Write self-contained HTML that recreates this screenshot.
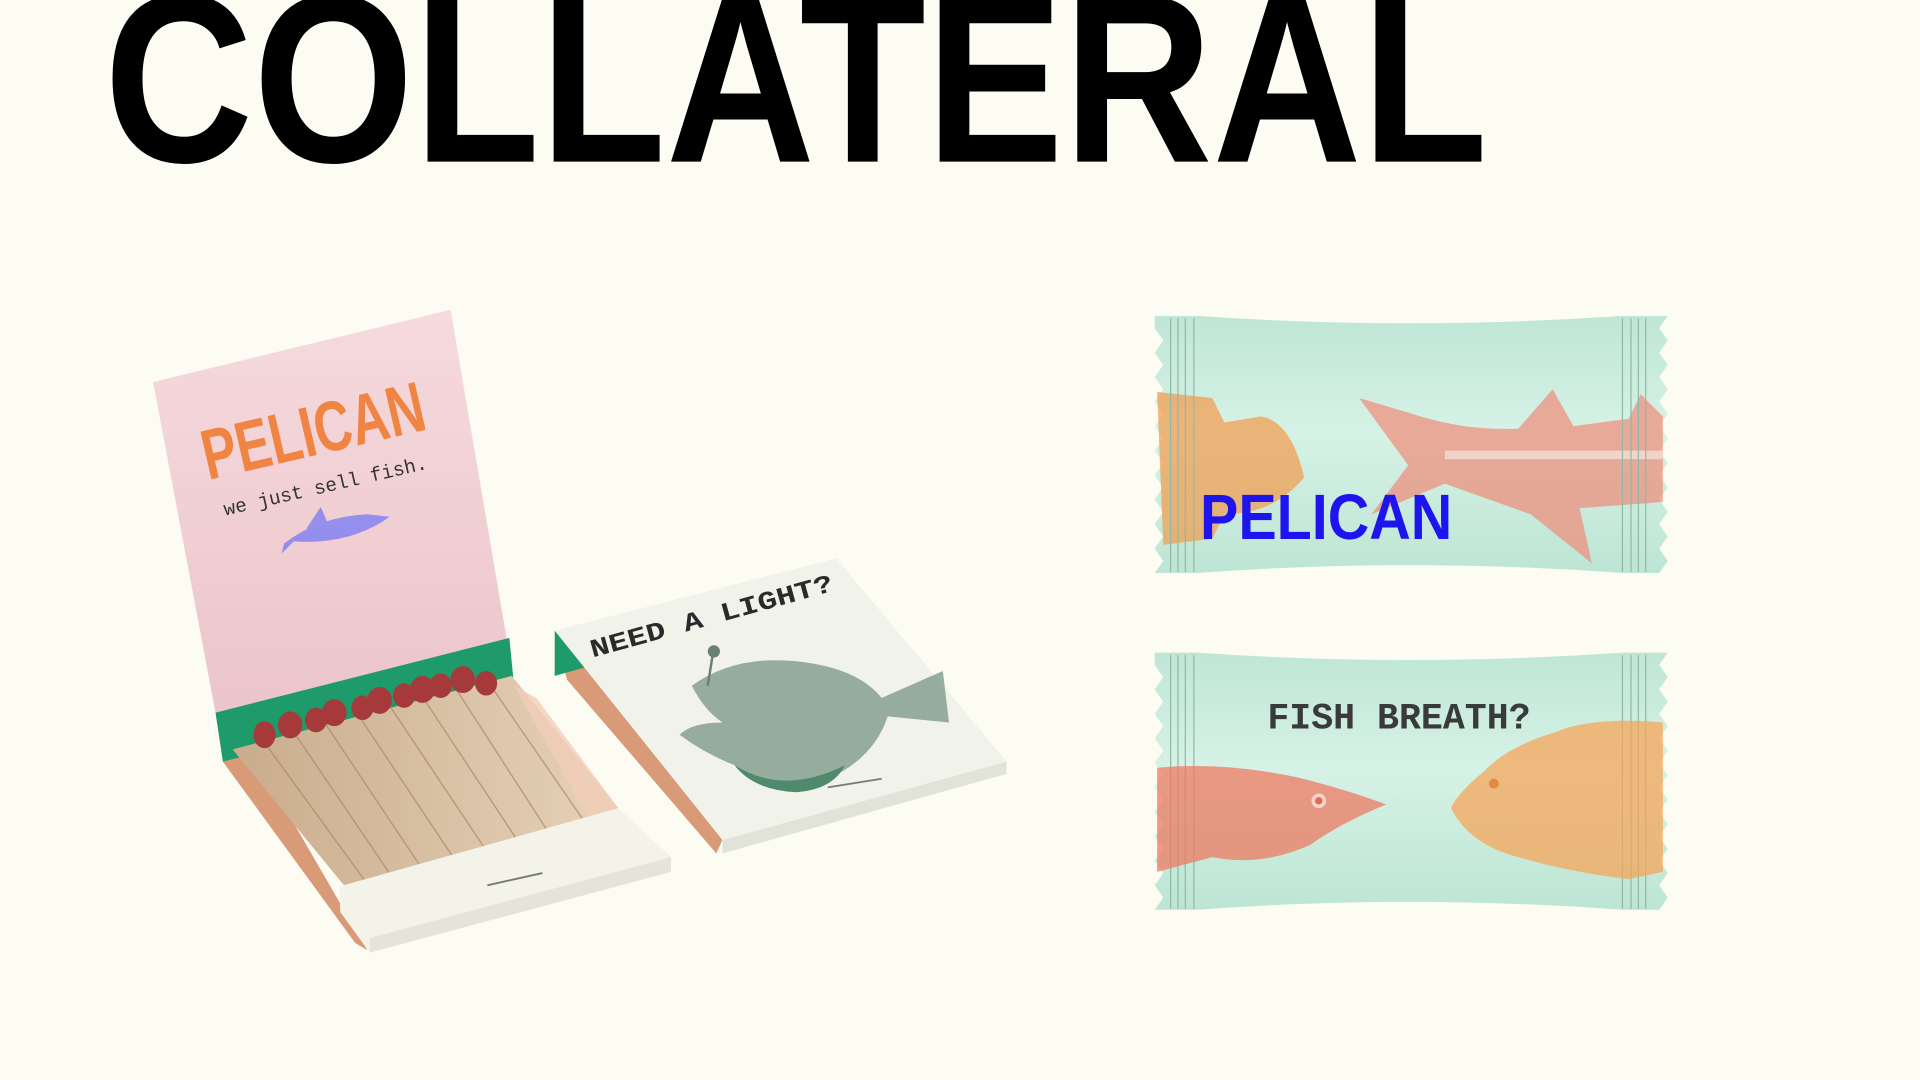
<!DOCTYPE html>
<html><head><meta charset="utf-8"><style>
html,body{margin:0;padding:0;background:#fdfcf3;width:1920px;height:1080px;overflow:hidden}
svg{display:block}
</style></head><body>
<svg width="1920" height="1080" viewBox="0 0 1568 882" xmlns="http://www.w3.org/2000/svg">
<defs>
<linearGradient id="pink" x1="0" y1="0" x2="0" y2="1"><stop offset="0" stop-color="#f6dadd"/><stop offset="1" stop-color="#ebc5ca"/></linearGradient>
<linearGradient id="mint" x1="0" y1="0" x2="0" y2="1"><stop offset="0" stop-color="#bfe6d6"/><stop offset=".45" stop-color="#d6f2e6"/><stop offset="1" stop-color="#bde5d4"/></linearGradient>
<linearGradient id="wood" x1="0" y1="0" x2="1" y2="0"><stop offset="0" stop-color="#c9ac8c"/><stop offset="1" stop-color="#e6d2b8"/></linearGradient>
</defs>
<rect width="1568" height="882" fill="#fdfcf3"/>
<text x="85" y="132" font-family="Liberation Sans, sans-serif" font-weight="700" font-size="196" textLength="1130" lengthAdjust="spacingAndGlyphs" fill="#000">COLLATERAL</text>

<!-- matchbook 1 -->
<polygon points="182,622 205,612 300,776 290,770" fill="#d99a78"/>
<polygon points="125,312 368,253 414,523 176,582" fill="url(#pink)"/>
<polygon points="176,582 416,521 420,562 182,622" fill="#1f9a6a"/>
<polygon points="190,612 418,552 505,660 285,728" fill="url(#wood)"/>
<g stroke="#a88a6a" stroke-width="1.2" opacity=".7">
<line x1="215" y1="605" x2="300" y2="722"/><line x1="240" y1="598" x2="320" y2="716"/><line x1="265" y1="590" x2="345" y2="710"/><line x1="292" y1="583" x2="372" y2="703"/><line x1="318" y1="576" x2="398" y2="696"/><line x1="345" y1="569" x2="425" y2="690"/><line x1="372" y1="562" x2="450" y2="683"/><line x1="398" y1="556" x2="478" y2="672"/></g>
<polygon points="420,560 438,570 505,660 480,668" fill="#f1cdb8" opacity=".8"/>
<g fill="#a63a3a">
<ellipse cx="216" cy="600" rx="9" ry="11"/><ellipse cx="237" cy="592" rx="10" ry="11"/><ellipse cx="258" cy="588" rx="9" ry="10"/><ellipse cx="273" cy="582" rx="10" ry="11"/><ellipse cx="296" cy="578" rx="9" ry="10"/><ellipse cx="310" cy="572" rx="10" ry="11"/><ellipse cx="330" cy="568" rx="9" ry="10"/><ellipse cx="345" cy="563" rx="10" ry="11"/><ellipse cx="360" cy="560" rx="9" ry="10"/><ellipse cx="378" cy="555" rx="10" ry="11"/><ellipse cx="397" cy="558" rx="9" ry="10"/></g>
<path d="M350,708 Q385,690 445,682 Q420,715 380,718 Q360,716 350,708Z" fill="#4f8a6c"/>
<polygon points="277,724 505,660 548,700 548,712 302,778 278,745" fill="#f3f3ea"/>
<polygon points="302,766 548,700 548,712 302,778" fill="#e4e4da"/>
<line x1="398" y1="723" x2="443" y2="713" stroke="#777" stroke-width="1.5"/>
<text x="170" y="392" font-family="Liberation Sans, sans-serif" font-weight="700" font-size="58" fill="#f08443" textLength="185" lengthAdjust="spacingAndGlyphs" transform="rotate(-13 170 392)">PELICAN</text>
<text x="184" y="421" font-family="Liberation Mono, monospace" font-size="16" fill="#333" textLength="170" lengthAdjust="spacingAndGlyphs" transform="rotate(-13 184 421)">we just sell fish.</text>
<path d="M232,444 Q260,422 300,420 L318,422 Q305,432 285,438 Q262,444 240,442 L230,452 Z M250,432 L262,414 L268,428 Z" fill="#8a86ee" opacity=".9"/>

<!-- matchbook 2 -->
<polygon points="453,515 470,528 590,686 585,697 463,555" fill="#d99a78"/>
<polygon points="453,515 478,545 453,552" fill="#1f9a6a"/>
<polygon points="453,515 683,456 822,622 590,686" fill="#f1f2ea"/>
<polygon points="590,686 822,622 822,632 590,697" fill="#e2e3d8"/>
<text x="484" y="537" font-family="Liberation Mono, monospace" font-weight="700" font-size="21" fill="#2a2a2a" textLength="205" lengthAdjust="spacingAndGlyphs" transform="rotate(-15.5 484 537)">NEED A LIGHT?</text>
<path d="M565,560 Q600,535 650,540 Q700,545 720,570 L770,548 L775,590 L725,585 Q710,630 650,645 Q615,645 600,625 Q575,615 555,600 Q565,590 590,590 Q575,580 565,560Z" fill="#7f9a8a" opacity=".8"/>
<path d="M600,625 Q640,650 690,625 Q680,645 650,647 Q615,645 600,625Z" fill="#4f8a6c"/>
<line x1="578" y1="560" x2="582" y2="535" stroke="#6a8070" stroke-width="2"/><circle cx="583" cy="532" r="5" fill="#6a8070"/>
<line x1="676" y1="643" x2="720" y2="636" stroke="#777" stroke-width="1.5"/>

<!-- candy 1 -->
<g id="c1">
<path d="M943,258 L978,258 Q1150,270 1325,258 L1362,258 L1355,268 L1362,278 L1355,288 L1362,298 L1355,308 L1362,318 L1355,328 L1362,338 L1355,348 L1362,358 L1355,368 L1362,378 L1355,388 L1362,398 L1355,408 L1362,418 L1355,428 L1362,438 L1355,448 L1362,458 L1355,468 L1325,468 Q1150,455 978,468 L943,468 L950,458 L943,448 L950,438 L943,428 L950,418 L943,408 L950,398 L943,388 L950,378 L943,368 L950,358 L943,348 L950,338 L943,328 L950,318 L943,308 L950,298 L943,288 L950,278 L943,268Z" fill="url(#mint)"/>
<path d="M945,320 L990,325 L1000,345 L1030,340 Q1055,345 1065,390 Q1040,420 1000,420 L990,440 L950,445Z" fill="#f39a4a" opacity=".7"/>
<path d="M1110,325 L1160,340 Q1200,352 1240,350 L1268,318 L1285,348 L1330,342 L1340,322 L1358,340 L1358,410 L1290,415 L1300,460 L1250,420 L1180,395 L1120,420 L1150,380Z" fill="#ef8a78" opacity=".7"/>
<rect x="1180" y="368" width="178" height="7" fill="#f7e6dc" opacity=".7"/>
<text x="980" y="440" font-family="Liberation Sans, sans-serif" font-weight="700" font-size="52" fill="#1d14ee" textLength="206" lengthAdjust="spacingAndGlyphs">PELICAN</text>
<g stroke="#8fb9a8" stroke-width="1"><line x1="956" y1="260" x2="956" y2="467"/><line x1="962" y1="260" x2="962" y2="467"/><line x1="968" y1="260" x2="968" y2="467"/><line x1="975" y1="260" x2="975" y2="467"/><line x1="1325" y1="260" x2="1325" y2="467"/><line x1="1332" y1="260" x2="1332" y2="467"/><line x1="1338" y1="260" x2="1338" y2="467"/><line x1="1344" y1="260" x2="1344" y2="467"/></g>
</g>
<!-- candy 2 -->
<g transform="translate(0,275)">
<path d="M943,258 L978,258 Q1150,270 1325,258 L1362,258 L1355,268 L1362,278 L1355,288 L1362,298 L1355,308 L1362,318 L1355,328 L1362,338 L1355,348 L1362,358 L1355,368 L1362,378 L1355,388 L1362,398 L1355,408 L1362,418 L1355,428 L1362,438 L1355,448 L1362,458 L1355,468 L1325,468 Q1150,455 978,468 L943,468 L950,458 L943,448 L950,438 L943,428 L950,418 L943,408 L950,398 L943,388 L950,378 L943,368 L950,358 L943,348 L950,338 L943,328 L950,318 L943,308 L950,298 L943,288 L950,278 L943,268Z" fill="url(#mint)"/>
<g stroke="#8fb9a8" stroke-width="1"><line x1="956" y1="260" x2="956" y2="467"/><line x1="962" y1="260" x2="962" y2="467"/><line x1="968" y1="260" x2="968" y2="467"/><line x1="975" y1="260" x2="975" y2="467"/><line x1="1325" y1="260" x2="1325" y2="467"/><line x1="1332" y1="260" x2="1332" y2="467"/><line x1="1338" y1="260" x2="1338" y2="467"/><line x1="1344" y1="260" x2="1344" y2="467"/></g>
</g>
<path d="M945,627 Q1000,622 1060,635 Q1100,645 1132,657 Q1095,672 1070,690 Q1030,708 990,700 L945,712Z" fill="#ee7a62" opacity=".75"/>
<circle cx="1077" cy="654" r="6" fill="#f7d4c8"/><circle cx="1077" cy="654" r="3" fill="#e06a52"/>
<path d="M1358,590 Q1300,585 1270,598 Q1230,610 1212,630 Q1190,648 1185,660 Q1200,690 1240,700 Q1280,712 1330,718 L1358,712Z" fill="#f6a55a" opacity=".75"/>
<circle cx="1220" cy="640" r="4" fill="#e08a40"/>
<text x="1035" y="595" font-family="Liberation Mono, monospace" font-weight="700" font-size="30" fill="#3a3a3a" textLength="215" lengthAdjust="spacingAndGlyphs">FISH BREATH?</text>
</svg>
</body></html>
